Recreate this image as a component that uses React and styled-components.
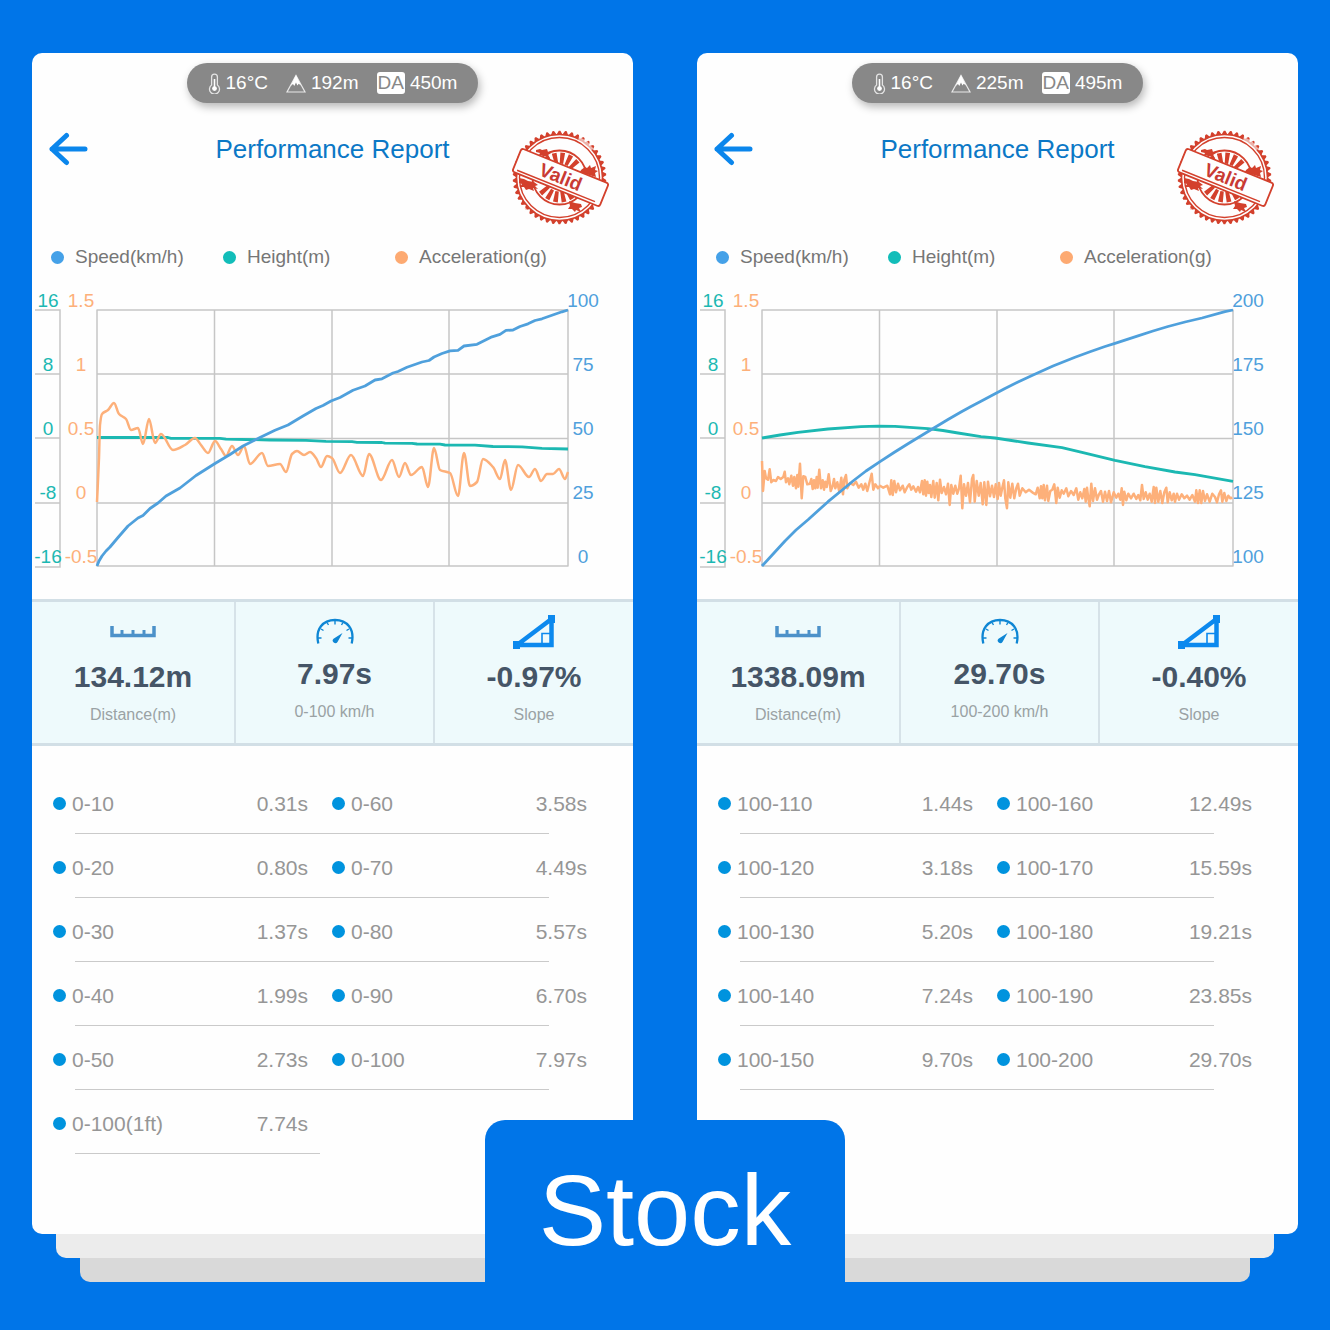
import React from "react";
import styled, { createGlobalStyle } from "styled-components";

const BLUE = "#0075e8";
const SPEED = "#4fa0dc";
const HEIGHT = "#1cb8b2";
const ACCEL = "#fdb07a";

const GlobalStyle = createGlobalStyle`
  * { box-sizing: border-box; }
  body {
    margin: 0;
    background: ${BLUE};
    font-family: "Liberation Sans", Arial, Helvetica, sans-serif;
  }
`;

/* ---------- page ---------- */

const Page = styled.main`
  position: relative;
  min-height: 100vh;
  padding: 53px 32px 48px;
  background: ${BLUE};
`;

const Columns = styled.div`
  display: grid;
  grid-template-columns: repeat(2, minmax(0, 1fr));
  gap: 64px;
`;

const Stack = styled.section`
  display: flex;
  flex-direction: column;
`;

const Card = styled.article`
  flex: 1;
  padding-bottom: 80px;
  border-radius: 10px;
  background: #fefefe;
`;

const Layer = styled.div`
  height: 24px;
  margin: 0 ${(p) => p.$inset}px;
  border-radius: 0 0 10px 10px;
  background: ${(p) => p.$color};
`;

const StockTab = styled.h1`
  position: absolute;
  left: 50%;
  bottom: 48px;
  width: 360px;
  height: 162px;
  margin: 0 0 0 -180px;
  padding-top: 30px;
  border-radius: 20px 20px 0 0;
  background: ${BLUE};
  color: #fff;
  font-size: 101px;
  font-weight: 400;
  line-height: 120px;
  text-align: center;
`;

/* ---------- weather pill ---------- */

const Pill = styled.div`
  display: flex;
  align-items: center;
  gap: 18px;
  width: fit-content;
  height: 40px;
  margin: 0 auto;
  padding: 0 21px;
  border-radius: 20px;
  background: #888;
  box-shadow: 2px 4px 8px rgba(0, 0, 0, 0.28);
  color: #fff;
  font-size: 19px;
  line-height: 22px;
`;

const PillItem = styled.span`
  display: flex;
  align-items: center;
  gap: 5px;
`;

const DaBadge = styled.abbr`
  padding: 0 1px;
  border-radius: 3px;
  background: #fff;
  color: #888;
`;

/* ---------- header ---------- */

const CardTop = styled.div`
  padding-top: 10px;
`;

const Header = styled.header`
  display: grid;
  grid-template-columns: 1fr auto 1fr;
  align-items: start;
  margin-top: 26px;
  padding: 0 16px;
`;

const BackButton = styled.button`
  display: flex;
  align-items: center;
  justify-self: start;
  height: 40px;
  padding: 0;
  border: 0;
  background: none;
  cursor: pointer;
`;

const Title = styled.h2`
  margin: 0;
  color: #0b78c6;
  font-size: 26px;
  font-weight: 400;
  line-height: 40px;
`;

const StampSlot = styled.div`
  justify-self: end;
  height: 98px;
  margin-right: 8px;
`;

/* ---------- legend ---------- */

const Legend = styled.ul`
  display: grid;
  grid-template-columns: 172fr 172fr 238fr;
  margin: 18px 0 0;
  padding: 0 0 0 19px;
  list-style: none;
  color: #767676;
  font-size: 19px;
  line-height: 24px;
`;

const LegendItem = styled.li`
  display: flex;
  align-items: center;
  gap: 11px;
`;

const Dot = styled.span`
  flex: none;
  width: 13px;
  height: 13px;
  border-radius: 50%;
  background: ${(p) => p.$color};
`;

/* ---------- chart ---------- */

const Chart = styled.div`
  display: grid;
  grid-template-columns: 26px 36px minmax(0, 1fr) 30px;
  height: 278px;
  margin: 21px 0 31px;
  padding: 0 35px 0 3px;
`;

const AxisLabels = styled.div`
  grid-area: 1 / ${(p) => p.$column};
  display: flex;
  flex-direction: column;
  align-items: center;
  justify-content: space-between;
  padding-left: ${(p) => (p.$column === 2 ? 4 : 0)}px;
  color: ${(p) => p.$color};
  font-size: 19px;
  line-height: 22px;
  white-space: nowrap;
`;

const AxisRule = styled.svg`
  grid-area: 1 / 1;
  align-self: end;
  display: block;
  width: 26px;
  height: 259px;
`;

const Plot = styled.svg`
  grid-area: 1 / 3;
  align-self: end;
  display: block;
  width: 100%;
  height: 256px;
  margin-bottom: 2px;
  overflow: visible;

  path {
    fill: none;
    stroke-linejoin: round;
    vector-effect: non-scaling-stroke;
  }
`;

/* ---------- stats ---------- */

const Stats = styled.div`
  display: grid;
  grid-template-columns: 204fr 199fr 198fr;
  border-top: 3px solid #d2dfe6;
  border-bottom: 3px solid #d2dfe6;
  background: #eefafc;
`;

const Stat = styled.div`
  display: flex;
  flex-direction: column;
  align-items: center;
  gap: 9px;
  height: 141px;
  padding-top: 12px;

  &:not(:last-child) {
    border-right: 2px solid #d6e2e8;
  }
`;

const StatIcon = styled.div`
  display: flex;
  align-items: center;
  height: ${(p) => (p.$tight ? 33 : 36)}px;
`;

const StatValue = styled.strong`
  color: #455567;
  font-size: 30px;
  font-weight: 700;
  line-height: 36px;
`;

const StatCaption = styled.span`
  color: #9aa2a4;
  font-size: 16px;
  line-height: 22px;
`;

/* ---------- split table ---------- */

const SplitTable = styled.table`
  display: block;
  margin: 24px 46px 0 21px;
  color: #969696;
  font-size: 21px;
  line-height: 24px;
`;

const SplitBody = styled.tbody`
  display: block;
`;

const SplitRow = styled.tr`
  display: grid;
  grid-template-columns: 153fr 102fr 24px 153fr 102fr;
  grid-template-rows: 59px 1px;
  align-items: center;
  padding-top: 4px;

  &::after {
    content: "";
    grid-row: 2;
    grid-column: ${(p) => (p.$half ? "1 / 3" : "1 / -1")};
    height: 1px;
    margin: ${(p) => (p.$half ? "0 -12px 0 22px" : "0 38px 0 22px")};
    background: #cacaca;
  }
`;

const SplitName = styled.th`
  grid-column: ${(p) => p.$column};
  display: flex;
  align-items: center;
  gap: 6px;
  padding: 0;
  font-weight: 400;
  white-space: nowrap;
`;

const SplitTime = styled.td`
  grid-column: ${(p) => p.$column};
  padding: 0;
  text-align: right;
`;

/* ---------- drawings ---------- */

const Thermometer = () => (
  <svg width="13" height="21" viewBox="0 0 13 21" fill="none" aria-hidden="true">
    <path d="M3.600 12V4a2.900 2.900 0 0 1 5.800 0v8a5 5 0 1 1-5.800 0z" stroke="#e4e4e4" strokeWidth="1.300" />
    <path d="M6.500 6v9" stroke="#fff" strokeWidth="1.600" />
    <circle cx="6.500" cy="15.600" r="2.400" fill="#fff" />
  </svg>
);

const Mountain = () => (
  <svg width="20" height="19" viewBox="0 0 20 19" aria-hidden="true">
    <path d="M10 1.500L19 18H1z" fill="none" stroke="#e8e8e8" strokeWidth="1.200" />
    <path d="M10 1L15 11.500l-2.300-1.700-1.300 1.700L10 8.500 8.300 12 7 10l-2.400 2z" fill="#fff" />
  </svg>
);

const BackArrow = () => (
  <svg width="40" height="34" viewBox="0 0 40 34" fill="none" stroke="#0b86ec" strokeWidth="5" strokeLinecap="round" strokeLinejoin="round" aria-hidden="true">
    <path d="M37 17H4M18.500 3.500L4 17l14.500 13.500" />
  </svg>
);

const polar = (r, deg) => {
  const a = (deg * Math.PI) / 180;
  return `${(48.5 + r * Math.cos(a)).toFixed(1)} ${(48.5 + r * Math.sin(a)).toFixed(1)}`;
};

const TEETH =
  Array.from({ length: 46 }, (_, i) => {
    const a = (i * 360) / 46;
    return `${i ? "L" : "M"}${polar(43, a)}L${polar(46.8, a + 3)}L${polar(46.8, a + 5)}`;
  }).join("") + "z";

const SPOKES = [-122, -102, -82, -62, -42, 60, 80, 100, 120, 140]
  .map((a) => `M${polar(14, a - 7)}L${polar(25, a - 6)}L${polar(25, a + 5)}L${polar(14, a + 7)}z`)
  .join("");

const Stamp = () => (
  <svg width="98" height="98" viewBox="0 0 98 98" role="img" aria-label="Valid">
    <g fill="none" stroke="#d3402c">
      <path d={TEETH} fill="#d3402c" stroke="none" />
      <circle cx="48.500" cy="48.500" r="43" fill="#fefefe" strokeWidth="1.600" />
      <circle cx="48.500" cy="48.500" r="40" strokeWidth="1.400" />
      <circle cx="48.500" cy="48.500" r="27" strokeWidth="1.800" />
    </g>
    <path d={SPOKES} fill="#d3402c" />
    <g fill="#d3402c">
      <path d="M25 21l4-1 2 1 5-1 1 3 3 1-3 2 2 3-6-2-5-1 1-2-4-1z" />
      <path d="M70 41l4-3 2 1 3-3 1 3 5-2-1 4 3 1-3 2 1 4-7-2-9-3z" />
      <path d="M8 49l5 1 4 2 6 1 4 3-3 1 3 3-5-1 1 3-5-2-3 1-2-3-4 0 2-3-3-1z" />
      <path d="M58 72l6 2 6 1 1 3-3 1 2 4-5-2-1 2-3-3-4 0 2-3z" />
    </g>
    <path d="M68 7l4 3 4 2 3 4 4 4-3 1-4-3-4-4-5-2z" fill="#fefefe" opacity="0.600" />
    <path d="M10 76l4 2 4 5-2 1-4-3z" fill="#fefefe" opacity="0.700" />
    <g transform="translate(49.500 48.500) rotate(22)">
      <rect x="-47" y="-12.500" width="94" height="25" rx="2.500" fill="#fefefe" stroke="#d3402c" strokeWidth="1.800" />
      <path d="M-43 9.500H41" stroke="#d3402c" strokeWidth="1.500" />
      <text x="0" y="6" textAnchor="middle" fill="#c93a33" fontSize="19" fontWeight="700" fontFamily="Liberation Sans, Arial, sans-serif">
        Valid
      </text>
    </g>
  </svg>
);

const Ruler = () => (
  <svg width="46" height="12" viewBox="0 0 46 12" fill="none" stroke="#4c91c9" aria-hidden="true">
    <path d="M2 0v9.500h42V0" strokeWidth="3.500" />
    <path d="M12 4v6M23 4v6M34 4v6" strokeWidth="3" />
  </svg>
);

const Gauge = () => (
  <svg width="38" height="26" viewBox="0 0 38 26" fill="none" stroke="#0e86d4" aria-hidden="true">
    <path d="M2.300 25.500C-1 11 7 2 19 2s20 9 16.700 23.500" strokeWidth="2.300" />
    <path d="M2 20h3.500M36 20h-3.500M5 11l2.500 1.500M33 11l-2.500 1.500M11 4.500l1.500 2.500M27 4.500L25.500 7M19 2v4.500" strokeWidth="1.400" />
    <path d="M26.500 15L21.500 24a2.600 2.600 0 1 1-4-3.300z" fill="#0e86d4" stroke="none" />
  </svg>
);

const Slope = () => (
  <svg width="42" height="34" viewBox="0 0 42 34" fill="none" stroke="#0c89ee" aria-hidden="true">
    <path d="M4 30L38.500 4v26z" strokeWidth="4.500" />
    <path d="M29 30V18.500H38" strokeWidth="1.600" />
    <path d="M35 0h7v8h-7zM0 26h7v8H0z" fill="#0c89ee" stroke="none" />
  </svg>
);

/* ---------- chart data: x,y pairs on the 471 x 256 plot ---------- */

const pairs = (text) =>
  text
    .trim()
    .split(/\s+/)
    .map((p) => p.split(",").map(Number));

const thirds = (text, dx, dy) => pairs(text).map(([x, y]) => [(x + dx) / 3, (y + dy) / 3]);

const line = (pts) => pts.map(([x, y], i) => `${i ? "L" : "M"}${x.toFixed(1)} ${y.toFixed(1)}`).join("");

/* Monotone cubic curve: rounded peaks that never overshoot a sample. */
const curve = (pts) => {
  const slope = pts.slice(1).map(([x, y], i) => (y - pts[i][1]) / (x - pts[i][0]));
  const tangent = pts.map((_, i) => {
    if (i === 0) return slope[0];
    if (i === pts.length - 1) return slope[i - 1];
    const a = slope[i - 1];
    const b = slope[i];
    return a * b <= 0 ? 0 : (2 * a * b) / (a + b);
  });
  return pts
    .map(([x, y], i) => {
      if (i === 0) return `M${x} ${y}`;
      const [px, py] = pts[i - 1];
      const h = (x - px) / 3;
      return `C${(px + h).toFixed(1)} ${(py + h * tangent[i - 1]).toFixed(1)} ${(x - h).toFixed(1)} ${(y - h * tangent[i]).toFixed(1)} ${x} ${y}`;
    })
    .join("");
};

const sprint = {
  height: line(
    pairs(
      "0,127.5 71,127.5 74,128.3 123,128.4 129,129.2 173,130 209,130.4 229,131.4 255,131.6 260,132.3 285,132.5 288,133.2 315,133.3 320,134 343,134.2 348,135 378,135.2 396,136.5 425,136.8 445,138.3 471,139"
    )
  ),
  speed: line(
    pairs(
      "0,256 2,251 5,246 9,241 13,237 21,227.500 31,216 41,208 46,205.500 53,198.500 61,193 69,186 83,178 99,165.500 118,153.500 133,144.500 146,136 163,127.500 178,120.300 191,115 206,106 219,98.500 226,95.500 234,91 243,87.500 256,80.300 268,76 278,70 285,68.800 296,63 301,61.500 310,57.300 325,52 332,50.500 337,47 345,43.500 353,40.800 361,40.300 367,36 380,34.300 395,26.800 403,24.300 409,20.400 416,20 423,16.500 431,13.800 438,10.500 445,8.800 465,1.800 471,0"
    )
  ),
  accel: curve(
    pairs(
      "0,192 2,148 3,115 5,104 11,100 17,93 22,104 29,109 34,120 41,118 46,134 52,109 58,133 64,124 76,140 88,135 98,128 104,135 111,143 118,131 124,139 129,146 135,136 141,145 147,136 153,154 165,143 171,156 183,154 189,162 195,144 200,141 207,145 213,142 219,148 224,157 230,146 235,148 243,163 254,145 266,166 272,144 284,170 295,150 302,167 308,153 314,165 325,157 331,177 337,138 343,160 353,163 361,186 367,143 373,176 380,172 386,149 396,157 403,169 408,150 414,180 421,155 432,167 438,159 444,171 450,164 456,164 462,159 468,169 471,162"
    )
  ),
};

const highSpeed = {
  height: line(
    pairs(
      "0,128 18,125 36,122.300 66,119 99,116.700 116,116.200 133,116.300 166,118.700 181,120.500 196,123 219,126.700 233,128 266,133 300,137.700 320,142.300 353,150.300 383,156.700 413,162 433,164.700 471,171.300"
    )
  ),
  speed: line(
    pairs(
      "0,256 12,243 23,231 34,220 46,209.700 66,191.700 79,181 91,171 104,161 118,151.700 132,142.500 146,133.700 169,119.700 186,109.500 199,102 209,96.500 219,91.300 234,83.300 243,78.500 256,72 270,65.500 291,56 313,47.200 328,41.700 343,36.500 353,33.300 376,25.800 391,21 406,16.500 423,12 440,8 463,1.700 471,0"
    )
  ),
  accel: line([
    ...thirds(
      "6,18 9,108 14,48 18,70 24,74 29,43 34,82 40,75 48,78 54,66 62,72 70,66 74,50 78,82 84,70 88,88 94,62 99,92 103,66 108,100 112,60 115,95 120,26 125,130 130,64 136,66 142,88 150,86 154,72 158,102 162,76 166,100 170,66 173,98 178,44 183,100 188,76 192,104 196,80 200,96 206,58 212,108 218,92 222,72 226,100 232,82 238,110 244,68 249,118 253,74 258,60 262,100 270,84 280,90 288,80 296,98 304,88 310,104 316,86 322,108 328,84 335,56 340,104 346,88 354,100 360,92 370,98 382,92 390,118 394,76 398,120 403,78 408,112 414,86 420,106 428,92 434,112 442,96 448,88 454,104 460,94 468,110 474,96 480,112 486,78 490,118 494,76 498,122 502,80 506,114 510,90 514,126 520,78 524,128 530,84 535,136 540,74 545,114 552,96 558,118 564,86 569,150 574,90 580,116 586,92 592,116 597,100 602,62 607,160 612,88 618,122 624,84 630,142 636,72 640,60 644,140 650,78 656,122 662,84 668,148 673,82 679,150 684,80 690,124 696,92 702,126",
      -6,
      435
    ),
    ...thirds(
      "2,88 8,132 12,84 17,122 22,98 27,76 31,130 36,160 40,82 46,128 52,86 58,130 64,100 69,86 74,122 82,100 92,112 102,104 112,112 122,118 128,98 134,130 138,94 142,130 146,90 150,136 156,92 160,138 166,108 172,104 178,88 184,144 188,98 194,128 200,106 206,116 214,100 220,124 228,108 236,120 244,100 250,134 256,112 262,130 268,102 272,140 276,98 280,130 284,154 289,86 294,138 300,100 306,134 312,118 318,108 324,140 330,110 336,138 342,108 348,142 356,112 364,128 370,116 376,134 380,100 384,150 388,110 394,136 400,116 408,130 416,116 424,132 430,120 436,136 441,90 446,132 452,112 458,134 464,116 470,140 476,96 480,144 484,98 490,140 496,108 502,144 508,112 514,98 518,142 524,112 530,136 536,116 540,140 546,116 552,134 560,118 568,130 576,122 584,134 592,120 600,140 604,106 609,144 614,106 619,144 624,108 630,138 636,118 644,140 652,116 660,126 666,142 672,118 678,106 682,140 688,114 694,138 700,122 706,130 712,128",
      699,
      435
    ),
  ]),
};

const reports = [
  {
    altitude: "192m",
    density: "450m",
    speedTicks: ["100", "75", "50", "25", "0"],
    traces: sprint,
    distance: "134.12m",
    time: "7.97s",
    range: "0-100 km/h",
    slope: "-0.97%",
    rows: [
      ["0-10", "0.31s", "0-60", "3.58s"],
      ["0-20", "0.80s", "0-70", "4.49s"],
      ["0-30", "1.37s", "0-80", "5.57s"],
      ["0-40", "1.99s", "0-90", "6.70s"],
      ["0-50", "2.73s", "0-100", "7.97s"],
      ["0-100(1ft)", "7.74s"],
    ],
  },
  {
    altitude: "225m",
    density: "495m",
    speedTicks: ["200", "175", "150", "125", "100"],
    traces: highSpeed,
    distance: "1338.09m",
    time: "29.70s",
    range: "100-200 km/h",
    slope: "-0.40%",
    rows: [
      ["100-110", "1.44s", "100-160", "12.49s"],
      ["100-120", "3.18s", "100-170", "15.59s"],
      ["100-130", "5.20s", "100-180", "19.21s"],
      ["100-140", "7.24s", "100-190", "23.85s"],
      ["100-150", "9.70s", "100-200", "29.70s"],
    ],
  },
];

const Axis = ({ column, color, ticks }) => (
  <AxisLabels $column={column} $color={color}>
    {ticks.map((t) => (
      <span key={t}>{t}</span>
    ))}
  </AxisLabels>
);

const PerformanceChart = ({ traces, speedTicks }) => (
  <Chart>
    <AxisRule viewBox="0 0 26 259" fill="none" stroke="#c6c6c6" strokeWidth="1.500" aria-hidden="true">
      <path d="M0 1H25V258H0M0 65H25M0 129H25M0 194H25" />
    </AxisRule>
    <Axis column={1} color={HEIGHT} ticks={["16", "8", "0", "-8", "-16"]} />
    <Plot viewBox="0 0 471 256" preserveAspectRatio="none" role="img" aria-label="Speed, height and acceleration">
      <path
        d="M0 0H471V256H0zM0 64H471M0 128.500H471M0 193H471M117.500 0V256M235 0V256M352 0V256"
        stroke="#c6c6c6"
        strokeWidth="1.500"
      />
      <path d={traces.height} stroke={HEIGHT} strokeWidth="2.800" />
      <path d={traces.accel} stroke={ACCEL} strokeWidth="2.500" />
      <path d={traces.speed} stroke={SPEED} strokeWidth="2.800" />
    </Plot>
    <Axis column={2} color={ACCEL} ticks={["1.5", "1", "0.5", "0", "-0.5"]} />
    <Axis column={4} color={SPEED} ticks={speedTicks} />
  </Chart>
);

const Report = ({ data }) => (
  <Stack>
    <Card>
      <CardTop>
        <Pill>
          <PillItem>
            <Thermometer />
            16°C
          </PillItem>
          <PillItem>
            <Mountain />
            {data.altitude}
          </PillItem>
          <PillItem>
            <DaBadge>DA</DaBadge>
            {data.density}
          </PillItem>
        </Pill>
      </CardTop>

      <Header>
        <BackButton type="button" aria-label="Back">
          <BackArrow />
        </BackButton>
        <Title>Performance Report</Title>
        <StampSlot>
          <Stamp />
        </StampSlot>
      </Header>

      <Legend>
        <LegendItem>
          <Dot $color="#45a1e8" />
          Speed(km/h)
        </LegendItem>
        <LegendItem>
          <Dot $color="#12bdb9" />
          Height(m)
        </LegendItem>
        <LegendItem>
          <Dot $color="#fdaa72" />
          Acceleration(g)
        </LegendItem>
      </Legend>

      <PerformanceChart traces={data.traces} speedTicks={data.speedTicks} />

      <Stats>
        <Stat>
          <StatIcon>
            <Ruler />
          </StatIcon>
          <StatValue>{data.distance}</StatValue>
          <StatCaption>Distance(m)</StatCaption>
        </Stat>
        <Stat>
          <StatIcon $tight>
            <Gauge />
          </StatIcon>
          <StatValue>{data.time}</StatValue>
          <StatCaption>{data.range}</StatCaption>
        </Stat>
        <Stat>
          <StatIcon>
            <Slope />
          </StatIcon>
          <StatValue>{data.slope}</StatValue>
          <StatCaption>Slope</StatCaption>
        </Stat>
      </Stats>

      <SplitTable>
        <SplitBody>
          {data.rows.map(([nameA, timeA, nameB, timeB]) => (
            <SplitRow key={nameA} $half={!nameB}>
              <SplitName scope="row" $column={1}>
                <Dot $color="#0093de" />
                {nameA}
              </SplitName>
              <SplitTime $column={2}>{timeA}</SplitTime>
              {nameB && (
                <>
                  <SplitName scope="row" $column={4}>
                    <Dot $color="#0093de" />
                    {nameB}
                  </SplitName>
                  <SplitTime $column={5}>{timeB}</SplitTime>
                </>
              )}
            </SplitRow>
          ))}
        </SplitBody>
      </SplitTable>
    </Card>
    <Layer $inset={24} $color="#ececec" />
    <Layer $inset={48} $color="#d9d9d9" />
  </Stack>
);

export default function App() {
  return (
    <>
      <GlobalStyle />
      <Page>
        <Columns>
          {reports.map((r) => (
            <Report key={r.range} data={r} />
          ))}
        </Columns>
        <StockTab>Stock</StockTab>
      </Page>
    </>
  );
}
